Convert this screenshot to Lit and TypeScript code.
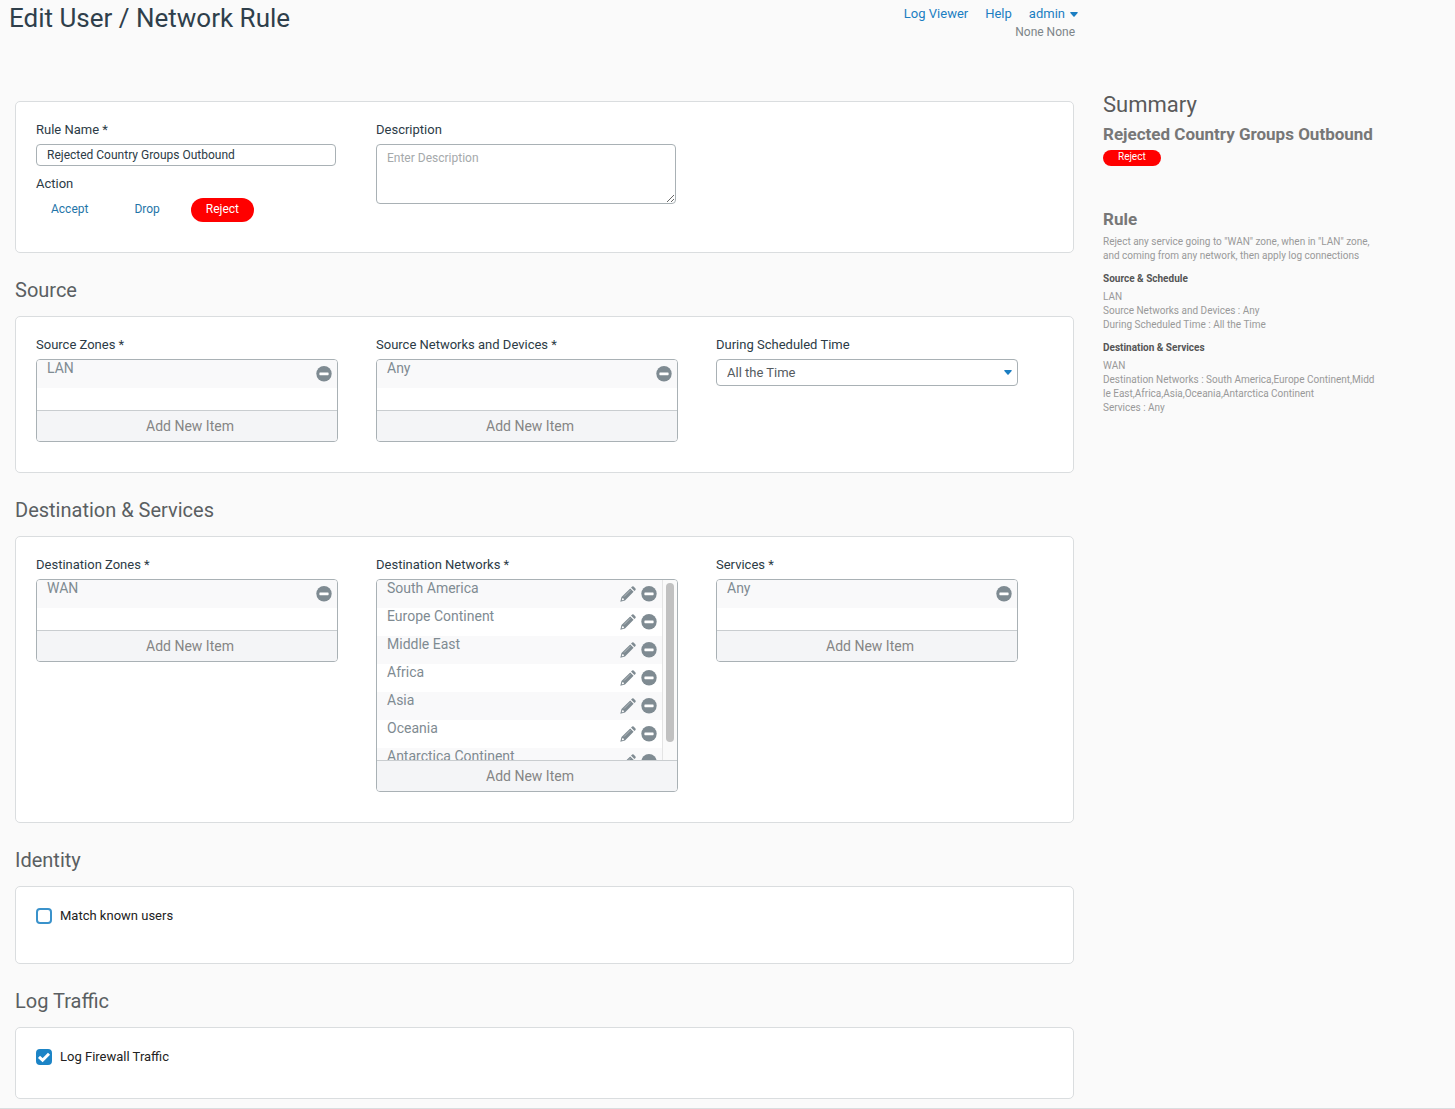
import { LitElement, html, css, svg, nothing } from "lit";
import { customElement, property, state } from "lit/decorators.js";
import { classMap } from "lit/directives/class-map.js";

const shared = css`
  * {
    box-sizing: border-box;
  }
  button {
    font: inherit;
    border: 0;
    margin: 0;
    padding: 0;
    background: none;
    cursor: pointer;
  }
  .label {
    display: block;
    margin-bottom: 5px;
    font-size: 13px;
    line-height: 18px;
    color: #2c3b46;
  }
`;

const pencil = svg`
  <svg class="icon" viewBox="0 0 16 16" width="16" height="16" aria-hidden="true">
    <path fill="#7f8b92" d="M11 1.6 L12.2 0.5 Q12.9 0 13.6 0.6 L15.5 2.5 Q16 3.2 15.5 3.9 L14.4 5 Z"/>
    <path fill="#7f8b92" fill-rule="evenodd" d="M10.2 2.4 L13.6 5.8 L5 14.5 L0.3 15.7 L1.5 11.1 Z M2.2 12.2 L1.7 14.3 L3.9 13.9 L3.7 12.5 Z"/>
    <path stroke="#c3c9cc" stroke-width="0.7" fill="none" d="M4 10.6 L10.4 4.2"/>
  </svg>`;

const minus = svg`
  <svg class="icon" viewBox="0 0 16 16" width="16" height="16" aria-hidden="true">
    <circle cx="8" cy="7.8" r="7.7" fill="#7f8b92"/>
    <rect x="3.4" y="6.4" width="9.2" height="2.8" rx="0.6" fill="#fff"/>
  </svg>`;

@customElement("item-picker")
class ItemPicker extends LitElement {
  @property() label = "";
  @property({ attribute: false }) items: string[] = [];
  @property({ type: Boolean }) editable = false;

  static styles = [
    shared,
    css`
      :host {
        display: block;
      }
      .box {
        border: 1px solid #a9b1b5;
        border-radius: 4px;
        overflow: hidden;
        background: #fff;
      }
      .scroller {
        display: flex;
        max-height: 180px;
        overflow: hidden;
      }
      .list {
        flex: 1;
        min-width: 0;
        min-height: 50px;
        margin: 0;
        padding: 0;
        list-style: none;
        overflow-y: auto;
        scrollbar-width: none;
      }
      .row {
        display: flex;
        height: 28px;
        padding: 0 5px 0 10px;
        gap: 5px;
        align-items: center;
        font-size: 14px;
        line-height: 16px;
        color: #7f8b92;
      }
      .row:nth-child(odd) {
        background: #f9f9fa;
      }
      .name {
        flex: 1;
        align-self: flex-start;
      }
      .tool,
      .icon {
        display: block;
        width: 16px;
        height: 16px;
      }
      .track {
        flex: none;
        width: 15px;
        padding: 3px;
        border-left: 1px solid #e4e4e4;
        background: #fafafa;
      }
      .thumb {
        width: 8px;
        height: 159px;
        border-radius: 4px;
        background: #c1c1c1;
      }
      .add {
        display: block;
        width: 100%;
        height: 31px;
        padding-left: 6px;
        border-top: 1px solid #c9cdd0;
        background: #f4f5f7;
        font-size: 14px;
        color: #858585;
      }
    `,
  ];

  private remove(name: string) {
    this.items = this.items.filter((i) => i !== name);
  }

  render() {
    return html`
      <span class="label" id="label">${this.label}</span>
      <div class="box" role="group" aria-labelledby="label">
        <div class="scroller">
          <ul class="list">
            ${this.items.map(
              (name) => html`<li class="row">
                <span class="name">${name}</span>
                ${this.editable
                  ? html`<button class="tool" type="button" aria-label="Edit ${name}">${pencil}</button>`
                  : nothing}
                <button class="tool" type="button" aria-label="Remove ${name}" @click=${() => this.remove(name)}>
                  ${minus}
                </button>
              </li>`
            )}
          </ul>
          ${this.items.length > 6 ? html`<div class="track" aria-hidden="true"><div class="thumb"></div></div>` : nothing}
        </div>
        <button class="add" type="button">Add New Item</button>
      </div>
    `;
  }
}

@customElement("app-root")
class AppRoot extends LitElement {
  @state() private action = "Reject";

  static styles = [
    shared,
    css`
      :host {
        display: block;
        font-family: Roboto, "Liberation Sans", sans-serif;
      }
      .page {
        display: grid;
        grid-template-columns: minmax(0, 1fr) 352px;
        column-gap: 25px;
        min-height: 100vh;
        padding: 0 0 9px 9px;
        border-bottom: 1px solid #dadddf;
        background: #fafafa;
      }
      .header {
        display: flex;
        justify-content: space-between;
        height: 101px;
      }
      .title {
        margin: 0;
        padding-top: 2px;
        font-size: 26px;
        line-height: 32px;
        font-weight: 400;
        color: #2f3f4b;
      }
      .account {
        padding-top: 5px;
        font-size: 13px;
        line-height: 18px;
        text-align: right;
      }
      .links {
        display: flex;
        gap: 17px;
      }
      .link {
        display: flex;
        align-items: center;
        gap: 5px;
        color: #1b7ec2;
        text-decoration: none;
      }
      .org {
        padding-right: 3px;
        font-size: 12px;
        color: #7d8589;
      }
      .content {
        padding: 0 4px 0 6px;
      }
      .section-title {
        margin: 24px 0 13px;
        font-size: 20px;
        line-height: 26px;
        font-weight: 400;
        color: #5a5f62;
      }
      .card {
        display: grid;
        grid-template-columns: repeat(3, minmax(0, 1fr));
        padding: 19px 17px 30px 20px;
        border: 1px solid #dadddf;
        border-radius: 5px;
        background: #fff;
      }
      .card.single {
        display: block;
        padding-top: 20px;
        padding-bottom: 38px;
      }
      .card.last {
        padding-bottom: 32px;
      }
      .col {
        padding-right: 38px;
      }
      .col.text {
        padding-right: 40px;
      }
      .input,
      .area,
      .select {
        display: block;
        width: 100%;
        margin: 0;
        border: 1px solid #a9b1b5;
        border-radius: 4px;
        background: #fff;
        font: inherit;
        font-size: 12px;
      }
      .input {
        height: 22px;
        padding: 0 10px;
        margin-bottom: 9px;
        color: #2c3b46;
      }
      .area {
        height: 60px;
        padding: 4px 10px;
        line-height: 18px;
        resize: both;
      }
      .area::placeholder {
        color: #a5a9ab;
      }
      .select-wrap {
        display: grid;
        align-items: center;
      }
      .select {
        grid-area: 1 / 1;
        height: 27px;
        padding: 0 10px;
        appearance: none;
        font-size: 13px;
        color: #555b5f;
      }
      .select-caret {
        grid-area: 1 / 1;
        justify-self: end;
        margin-right: 6px;
        pointer-events: none;
      }
      .actions {
        display: flex;
        gap: 16px;
      }
      .action {
        height: 24px;
        padding: 0 15px 2px;
        border-radius: 12px;
        font-size: 12px;
        color: #1f75a8;
      }
      .action.on {
        background: #f00;
        color: #fff;
      }
      .check {
        display: flex;
        align-items: center;
        gap: 8px;
        font-size: 13px;
        line-height: 18px;
        color: #222;
      }
      .tick {
        display: grid;
        width: 16px;
        height: 16px;
      }
      .box {
        grid-area: 1 / 1;
        appearance: none;
        width: 16px;
        height: 16px;
        margin: 0;
        border: 2px solid #3a92cb;
        border-radius: 4px;
        background: #fff;
      }
      .box:checked {
        border-color: #1c84c6;
        background: #1c84c6;
      }
      .mark {
        grid-area: 1 / 1;
        pointer-events: none;
      }
      .summary {
        width: 278px;
        padding-top: 92px;
        font-size: 10px;
        line-height: 14px;
        color: #999;
      }
      .summary-title {
        margin: 0 0 3px;
        font-size: 22px;
        line-height: 26px;
        font-weight: 400;
        color: #5a5a5a;
      }
      .summary-name {
        margin: 0;
        font-size: 17px;
        line-height: 26px;
        font-weight: 700;
        color: #777;
      }
      .pill {
        display: inline-block;
        height: 16px;
        margin: 3px 0 40px;
        padding: 0 15px;
        border-radius: 8px;
        background: #f00;
        color: #fff;
      }
      .summary-lead {
        margin: 3px 0 0;
      }
      .summary-sub {
        margin: 9px 0 4px;
        font-size: 10px;
        line-height: 14px;
        font-weight: 700;
        color: #555;
      }
      .summary-text {
        margin: 0;
      }
    `,
  ];

  private caret(cls: string) {
    return html`<svg class=${cls} viewBox="0 0 8 5" width="8" height="5" aria-hidden="true">
      <path fill="#1b7ec2" d="M0.6 0 H7.4 Q8 0.3 7.6 0.9 L4.6 4.4 Q4 5 3.4 4.4 L0.4 0.9 Q0 0.3 0.6 0 Z" />
    </svg>`;
  }

  private checkbox(id: string, text: string, checked: boolean) {
    return html`<label class="check" for=${id}>
      <span class="tick">
        <input class="box" id=${id} type="checkbox" ?checked=${checked} />
        <svg class="mark" viewBox="0 0 16 16" width="16" height="16" aria-hidden="true">
          <path fill="none" stroke="#fff" stroke-width="3" d="M3 7.8 L6.6 11.2 L13 4.8" />
        </svg>
      </span>
      ${text}
    </label>`;
  }

  render() {
    return html`
      <div class="page">
        <main>
          <header class="header">
            <h1 class="title">Edit User / Network Rule</h1>
            <div class="account">
              <nav class="links">
                <a class="link" href="#logs">Log Viewer</a>
                <a class="link" href="#help">Help</a>
                <a class="link" href="#admin">admin ${this.caret("caret")}</a>
              </nav>
              <div class="org">None None</div>
            </div>
          </header>

          <form class="content" @submit=${(e: Event) => e.preventDefault()}>
            <section class="card">
              <div class="col text">
                <label class="label" for="name">Rule Name *</label>
                <input class="input" id="name" type="text" value="Rejected Country Groups Outbound" />
                <span class="label" id="action">Action</span>
                <div class="actions" role="group" aria-labelledby="action">
                  ${["Accept", "Drop", "Reject"].map(
                    (a) => html`<button
                      type="button"
                      class=${classMap({ action: true, on: a === this.action })}
                      aria-pressed=${a === this.action ? "true" : "false"}
                      @click=${() => (this.action = a)}
                    >
                      ${a}
                    </button>`
                  )}
                </div>
              </div>
              <div class="col text">
                <label class="label" for="description">Description</label>
                <textarea class="area" id="description" placeholder="Enter Description"></textarea>
              </div>
            </section>

            <h2 class="section-title">Source</h2>
            <section class="card">
              <item-picker class="col" label="Source Zones *" .items=${["LAN"]}></item-picker>
              <item-picker class="col" label="Source Networks and Devices *" .items=${["Any"]}></item-picker>
              <div class="col">
                <label class="label" for="schedule">During Scheduled Time</label>
                <div class="select-wrap">
                  <select class="select" id="schedule">
                    <option>All the Time</option>
                  </select>
                  ${this.caret("select-caret")}
                </div>
              </div>
            </section>

            <h2 class="section-title">Destination &amp; Services</h2>
            <section class="card">
              <item-picker class="col" label="Destination Zones *" .items=${["WAN"]}></item-picker>
              <item-picker
                class="col"
                label="Destination Networks *"
                editable
                .items=${["South America", "Europe Continent", "Middle East", "Africa", "Asia", "Oceania", "Antarctica Continent"]}
              ></item-picker>
              <item-picker class="col" label="Services *" .items=${["Any"]}></item-picker>
            </section>

            <h2 class="section-title">Identity</h2>
            <section class="card single">${this.checkbox("users", "Match known users", false)}</section>

            <h2 class="section-title">Log Traffic</h2>
            <section class="card single last">${this.checkbox("log", "Log Firewall Traffic", true)}</section>
          </form>
        </main>

        <aside class="summary">
          <h2 class="summary-title">Summary</h2>
          <h3 class="summary-name">Rejected Country Groups Outbound</h3>
          <span class="pill">${this.action}</span>
          <h3 class="summary-name">Rule</h3>
          <p class="summary-lead">
            Reject any service going to "WAN" zone, when in "LAN" zone, and coming from any network, then apply log
            connections
          </p>
          <h4 class="summary-sub">Source &amp; Schedule</h4>
          <p class="summary-text">LAN</p>
          <p class="summary-text">Source Networks and Devices : Any</p>
          <p class="summary-text">During Scheduled Time : All the Time</p>
          <h4 class="summary-sub">Destination &amp; Services</h4>
          <p class="summary-text">WAN</p>
          <p class="summary-text">
            Destination Networks : South America,Europe Continent,Midd<wbr />le East,Africa,Asia,Oceania,Antarctica
            Continent
          </p>
          <p class="summary-text">Services : Any</p>
        </aside>
      </div>
    `;
  }
}
